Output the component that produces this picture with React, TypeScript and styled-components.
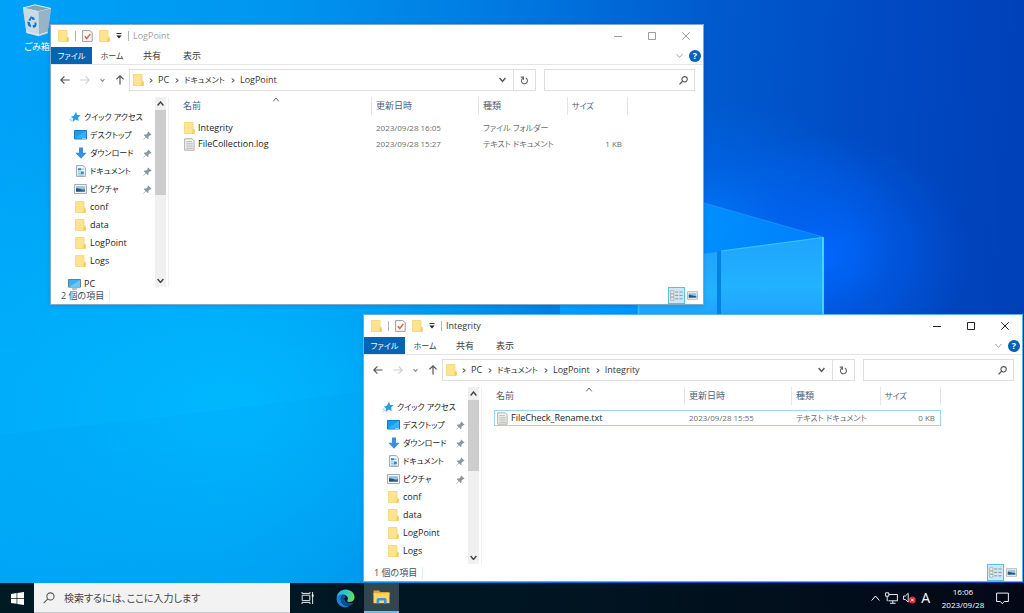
import React from "react";
import styled, { createGlobalStyle, css } from "styled-components";

const latin = `"Open Sans", "Noto Sans", "Noto Sans CJK JP", sans-serif`;

const GlobalStyle = createGlobalStyle`
  *, *::before, *::after { box-sizing: border-box; }
  html, body { margin: 0; height: 100%; }
  body {
    overflow: hidden;
    font-family: ${latin};
    font-size: 9px;
    line-height: 12px;
    color: #222;
    font-feature-settings: "palt";
  }
  button, input {
    margin: 0;
    padding: 0;
    border: 0;
    background: none;
    font: inherit;
    font-feature-settings: inherit;
    color: inherit;
    outline: none;
  }
  svg { display: block; flex: none; }
  a { color: inherit; text-decoration: none; }
`;

const Screen = styled.div`
  height: 100vh;
  display: flex;
  flex-direction: column;
`;

const Desktop = styled.main`
  position: relative;
  flex: 1;
  min-height: 0;
  overflow: hidden;
  background:
    radial-gradient(ellipse 140px 120px at 830px 255px, rgba(0, 104, 255, 0.9), rgba(0, 100, 250, 0.45) 45%, rgba(0, 90, 235, 0) 100%),
    radial-gradient(ellipse 200px 130px at 700px 230px, rgba(0, 125, 255, 0.9), rgba(0, 110, 250, 0.4) 50%, rgba(0, 90, 235, 0) 100%),
    radial-gradient(ellipse 480px 330px at 230px 410px, rgba(0, 186, 255, 0.95), rgba(0, 184, 255, 0) 100%),
    linear-gradient(94deg, #00a2f8 0%, #0096ef 26%, #0078e0 48%, #0059cd 68%, #004bc4 82%, #003eb6 100%);
`;

const WallpaperArt = styled.svg`
  position: absolute;
  left: 0;
  top: 0;
`;

const DesktopShortcut = styled.button`
  position: absolute;
  left: 13px;
  top: 4px;
  width: 48px;
  display: flex;
  flex-direction: column;
  align-items: center;
  gap: 4px;
  color: #fff;
`;

const WindowFrame = styled.section<{ $x: number; $y: number; $w: number; $h: number; $active?: boolean }>`
  position: absolute;
  left: ${(p) => p.$x}px;
  top: ${(p) => p.$y}px;
  width: ${(p) => p.$w}px;
  height: ${(p) => p.$h}px;
  display: flex;
  flex-direction: column;
  background: #fff;
  border: 1px solid ${(p) => (p.$active ? "#58b4ee" : "#7fa9cb")};
  box-shadow: 0 1px 4px rgba(0, 30, 90, 0.15);
`;

const TitleBar = styled.header<{ $active?: boolean }>`
  height: 22px;
  flex: none;
  display: flex;
  align-items: center;
  padding-left: 7px;
  color: ${(p) => (p.$active ? "#333" : "#a0a0a0")};
`;

const QuickTools = styled.div`
  display: flex;
  align-items: center;
  gap: 6px;
  margin-right: 4px;
`;

const ToolButton = styled.button`
  display: flex;
`;

const Divider = styled.span`
  width: 1px;
  height: 10px;
  background: #b4b4b4;
`;

const Title = styled.h1`
  margin: 0;
  flex: 1;
  font-size: 9px;
  font-weight: 400;
`;

const CaptionButton = styled.button<{ $active?: boolean }>`
  width: 34px;
  height: 22px;
  display: flex;
  align-items: center;
  justify-content: center;
  color: ${(p) => (p.$active ? "#222" : "#9a9a9a")};
`;

const Ribbon = styled.nav`
  height: 18px;
  flex: none;
  display: flex;
  align-items: stretch;
  border-bottom: 1px solid #e3e5e7;
`;

const RibbonTab = styled.button<{ $file?: boolean }>`
  width: ${(p) => (p.$file ? 41 : 40)}px;
  height: 17px;
  color: #3c3c3c;
  white-space: nowrap;
  ${(p) => p.$file && css`
    background: #0564b2;
    color: #fff;
  `}
`;

const RibbonEnd = styled.div`
  margin-left: auto;
  display: flex;
  align-items: center;
  gap: 6px;
  padding-right: 2px;
`;

const HelpButton = styled.button`
  width: 12px;
  height: 12px;
  border-radius: 50%;
  background: #0062b8;
  color: #fff;
  font-size: 9px;
  font-weight: 700;
  line-height: 12px;
`;

const AddressRow = styled.div`
  flex: none;
  display: flex;
  align-items: center;
  height: 30px;
  padding: 0 8px 0 9px;
`;

const NavButtons = styled.div`
  width: 69px;
  flex: none;
  display: flex;
  align-items: center;
  justify-content: space-between;
  padding-right: 4px;
`;

const IconButton = styled.button<{ $tone?: string }>`
  display: flex;
  color: ${(p) => p.$tone ?? "#555"};
`;

const AddressBox = styled.div`
  flex: 1;
  min-width: 0;
  height: 22px;
  display: flex;
  align-items: center;
  border: 1px solid #dedede;
  padding-left: 3px;
`;

const Crumbs = styled.ol`
  flex: 1;
  display: flex;
  align-items: center;
  gap: 6px;
  margin: 0;
  padding: 0 0 0 5px;
  list-style: none;
  color: #333;
`;

const Crumb = styled.li`
  display: flex;
  align-items: center;
  gap: 5px;
  white-space: nowrap;
`;

const Kana = styled.span`
  font-size: 8px;
`;

const RefreshButton = styled.button`
  width: 22px;
  align-self: stretch;
  margin-left: 7px;
  display: flex;
  align-items: center;
  justify-content: center;
  border-left: 1px solid #dedede;
  color: #666;
`;

const SearchBox = styled.label`
  width: 151px;
  height: 22px;
  margin-left: 8px;
  display: flex;
  align-items: center;
  border: 1px solid #dedede;
  padding: 0 6px;
  input { flex: 1; min-width: 0; }
`;

const Body = styled.div`
  flex: 1;
  min-height: 0;
  display: flex;
  padding-top: 2px;
`;

const Sidebar = styled.aside`
  width: 118px;
  flex: none;
  display: flex;
  border-right: 1px solid #f0f0f0;
  padding-right: 2px;
`;

const Tree = styled.ul`
  flex: 1;
  margin: 0;
  padding: 11px 0 0 17px;
  list-style: none;
`;

const TreeItem = styled.li<{ $root?: boolean; $spaced?: boolean }>`
  height: ${(p) => (p.$spaced ? 12 : 18)}px;
  margin-top: ${(p) => (p.$spaced ? 8 : 0)}px;
  padding-left: ${(p) => (p.$root ? 0 : 6)}px;
  a {
    height: 100%;
    display: flex;
    align-items: center;
    gap: 3px;
    white-space: nowrap;
  }
`;

const TreeIcon = styled.span`
  width: 13px;
  display: flex;
  justify-content: center;
`;

const TreeLabel = styled.span<{ $kana?: boolean }>`
  flex: 1;
  font-size: ${(p) => (p.$kana ? 8 : 9)}px;
`;

const PinSlot = styled.span`
  padding-right: 3px;
`;

const ScrollTrack = styled.div`
  width: 11px;
  flex: none;
  display: flex;
  flex-direction: column;
  background: #f0f0f0;
`;

const ScrollArrow = styled.button`
  height: 13px;
  flex: none;
  display: flex;
  align-items: center;
  justify-content: center;
  color: #444;
`;

const ScrollThumb = styled.div<{ $size: number }>`
  height: ${(p) => p.$size}px;
  margin-bottom: auto;
  background: #cdcdcd;
`;

const FileArea = styled.div`
  flex: 1;
  min-width: 0;
  padding-left: 12px;
`;

const FileTable = styled.table`
  width: 447px;
  table-layout: fixed;
  border-collapse: separate;
  border-spacing: 0;
`;

const HeadCell = styled.th<{ $first?: boolean }>`
  position: relative;
  height: 18px;
  padding: 0 0 0 ${(p) => (p.$first ? 2 : 4)}px;
  border-right: 1px solid #e4e4e4;
  text-align: left;
  font-weight: 400;
  color: #4c607a;
`;

const SortMark = styled.span`
  position: absolute;
  top: 0;
  left: 50%;
  transform: translateX(-50%);
  color: #666;
`;

const HeadSpacer = styled.tr`
  td { height: 5px; padding: 0; }
`;

const FileRow = styled.tr<{ $selected?: boolean }>`
  ${(p) => p.$selected && css`
    outline: 1px solid #99d1ff;
    outline-offset: -1px;
  `}
`;

const Cell = styled.td<{ $right?: boolean; $small?: boolean }>`
  height: 16px;
  padding: 0 ${(p) => (p.$right ? 6 : 0)}px 0 4px;
  font-size: ${(p) => (p.$small ? 8 : 9)}px;
  text-align: ${(p) => (p.$right ? "right" : "left")};
  white-space: nowrap;
  color: #6d6d6d;
`;

const NameCell = styled(Cell)`
  padding-left: 3px;
  color: #222;
  a { display: flex; align-items: center; gap: 3px; }
`;

const StatusBar = styled.footer`
  height: 17px;
  flex: none;
  display: flex;
  align-items: center;
  padding: 0 3px 0 10px;
  color: #3c4f6b;
`;

const StatusText = styled.span`
  padding-right: 5px;
  margin-right: auto;
  border-right: 1px solid #ececec;
`;

const ViewButton = styled.button<{ $on?: boolean }>`
  width: ${(p) => (p.$on ? 17 : 15)}px;
  height: 17px;
  display: flex;
  align-items: center;
  justify-content: center;
  border: 1px solid ${(p) => (p.$on ? "#5bbfe3" : "transparent")};
  background: ${(p) => (p.$on ? "#cbe8f3" : "transparent")};
`;

const Taskbar = styled.footer`
  height: 30px;
  flex: none;
  display: flex;
  align-items: stretch;
  background: linear-gradient(90deg, #001a24 0%, #001622 50%, #030817 100%);
  color: #fff;
`;

const TaskButton = styled.button<{ $width: number; $open?: boolean }>`
  width: ${(p) => p.$width}px;
  display: flex;
  align-items: center;
  justify-content: center;
  ${(p) => p.$open && css`
    background: #33454f;
    border-bottom: 2px solid #76b9ed;
  `}
`;

const TaskSearch = styled.label`
  width: 256px;
  display: flex;
  align-items: center;
  gap: 9px;
  padding: 0 9px;
  background: #f2f2f2;
  border-bottom: 1px solid #c4c8ca;
  color: #333;
  input {
    flex: 1;
    min-width: 0;
    font-size: 10px;
  }
  input::placeholder { color: #444; opacity: 1; }
`;

const Tray = styled.div`
  margin-left: auto;
  display: flex;
  align-items: center;
  gap: 5px;
  padding-right: 15px;
`;

const ImeButton = styled.button`
  font-size: 14px;
  line-height: 16px;
`;

const Clock = styled.time`
  width: 56px;
  text-align: center;
  font-size: 8px;
  line-height: 13px;
`;

const FolderIcon = () => (
  <svg width="11" height="12" viewBox="0 0 11 12">
    <path d="M0.5 0.5h8.5v6.5l1.5 0.6v3.9h-10z" fill="#ffe38e" stroke="#f3d374" strokeWidth="0.8" />
    <path d="M8.6 7.6h1.9v3.9h-2.4z" fill="#f3cd62" />
  </svg>
);

const FileIcon = () => (
  <svg width="11" height="13" viewBox="0 0 11 13">
    <path d="M0.7 0.8h7.4l2 2v9.4h-9.4z" fill="#f4f4f2" stroke="#a5a5a3" strokeWidth="0.9" />
    <path d="M2.3 3.5h5.6M2.3 5.3h6.4M2.3 7.1h6.4M2.3 8.9h6.4M2.3 10.6h6.4" stroke="#a9b0b0" strokeWidth="0.8" />
  </svg>
);

const PropertiesIcon = () => (
  <svg width="11" height="12" viewBox="0 0 11 12">
    <path d="M0.6 0.6h7.2l2.4 2v8.8h-9.6z" fill="#fbfbfb" stroke="#9b9b9b" />
    <path d="M2.8 6.2l2 2.3 3.6-4.6" fill="none" stroke="#e0653a" strokeWidth="1.5" />
  </svg>
);

const StarIcon = () => (
  <svg width="12" height="12" viewBox="0 0 12 12">
    <path d="M7 0.8l1.2 3.1 3.4 0.2-2.4 2.4 0.5 3.6-3.1-1.5-3 2.3 0.4-3.6-2.2-1.6 3.1-1z" fill="#2b9be6" />
    <path d="M0.3 8.4l2.4-0.5M1 10.6l2-1.6" stroke="#7cc4f2" strokeWidth="0.8" />
  </svg>
);

const DesktopIcon = () => (
  <svg width="13" height="10" viewBox="0 0 13 10">
    <path d="M0.5 0.5h12v8.5h-12z" fill="#15a0f5" stroke="#1577c6" />
    <path d="M1 8.5L11.5 1h0.5v7.5z" fill="#35b2fb" />
    <path d="M8 8.8h4" stroke="#fff" strokeWidth="0.7" />
  </svg>
);

const DownloadIcon = () => (
  <svg width="12" height="12" viewBox="0 0 12 12">
    <path d="M4 0.4h4v5.4h3.7L6 11.8 0.3 5.8h3.7z" fill="#3a8edb" />
  </svg>
);

const DocumentIcon = () => (
  <svg width="10" height="12" viewBox="0 0 10 12">
    <path d="M0.6 0.6h6.4l2.4 2.2v8.6h-8.8z" fill="#f8fafb" stroke="#8f9aa3" strokeWidth="0.9" />
    <path d="M2 3.2h3.4v2h-3.4z M4.6 6.6h3.2v2.6h-3.2z" fill="#2d8ad0" />
    <path d="M6 4.2h2M2 6.8h2M2 8.6h2M2 10.1h5.6" stroke="#64a9db" strokeWidth="0.8" />
  </svg>
);

const PictureIcon = ({ w = 13, h = 10 }: { w?: number; h?: number }) => (
  <svg width={w} height={h} viewBox="0 0 13 10">
    <path d="M0.5 0.5h12v9h-12z" fill="#f3f4f5" stroke="#a6adb2" />
    <path d="M2 2.2h9v2.8h-9z" fill="#8cc5ef" />
    <path d="M2 4.4c2.4-0.8 4 1.6 9 0.9v2.5h-9z" fill="#28546e" />
    <path d="M5 7.8c2-1.3 4-1.1 6-1.2v1.2z" fill="#4c8bd0" />
  </svg>
);

const PcIcon = () => (
  <svg width="13" height="11" viewBox="0 0 13 11">
    <path d="M0.5 0.5h12v7.6h-12z" fill="#3eb0f0" stroke="#5b8099" />
    <path d="M1 8L12 1v7z" fill="#6cc7f6" />
    <path d="M4 10h5" stroke="#6f8796" />
  </svg>
);

const PinIcon = () => (
  <svg width="9" height="9" viewBox="0 0 9 9">
    <path d="M5.2 0.4l3.4 3.4-0.9 0.5-0.7-0.1-1.6 1.6 0.1 1.7-0.8 0.6-1.7-1.8-2.5 2.4-0.3-0.3 2.3-2.5-1.7-1.7 0.7-0.8 1.7 0.1 1.6-1.6-0.1-0.8z" fill="#8a959d" />
  </svg>
);

const Chevron = ({ dir, size = 6, weight = 1 }: { dir: "up" | "down" | "right"; size?: number; weight?: number }) => {
  const angle = { up: 180, down: 0, right: -90 }[dir];
  const narrow = dir === "right";
  const half = size / 2;
  return (
    <svg width={narrow ? 4 : size} height={narrow ? size : half + 2} viewBox={narrow ? `-2 ${-half} 4 ${size}` : `${-half} ${-(half + 2) / 2} ${size} ${half + 2}`}>
      <path
        d={`M${-half + 0.6} ${-half / 2}L0 ${half / 2}L${half - 0.6} ${-half / 2}`}
        transform={`rotate(${angle})`}
        fill="none"
        stroke="currentColor"
        strokeWidth={weight}
      />
    </svg>
  );
};

const ArrowIcon = ({ turn = 0 }: { turn?: number }) => (
  <svg width="10" height="10" viewBox="-5 -5 10 10">
    <path d="M4.6 0H-4M-0.6 -3.6L-4.2 0L-0.6 3.6" transform={`rotate(${turn})`} fill="none" stroke="currentColor" strokeWidth="1.2" />
  </svg>
);

const RefreshIcon = () => (
  <svg width="9" height="9" viewBox="0 0 9 9">
    <path d="M5.8 2.1a3 3 0 1 1-2.900 0.100M0.800 1.100h2.700v2.700" fill="none" stroke="currentColor" strokeWidth="1.1" />
  </svg>
);

const LensIcon = ({ size = 9 }: { size?: number }) => (
  <svg width={size} height={size} viewBox="0 0 10 10">
    <circle cx="6.2" cy="3.7" r="3" fill="none" stroke="#555" strokeWidth={size > 9 ? 0.9 : 1.2} />
    <path d="M4 5.8L0.6 9.3" stroke="#555" strokeWidth={size > 9 ? 0.9 : 1.4} />
  </svg>
);

const DetailsIcon = () => (
  <svg width="13" height="11" viewBox="0 0 13 11">
    <path d="M0.6 0.7h3.2v2.7h-3.2zM0.6 4.1h3.2v2.7h-3.2zM0.6 7.5h3.2v2.7h-3.2z" fill="#f6f3f0" stroke="#a69d98" strokeWidth="0.7" />
    <path d="M5.2 2h3M9.4 2h3.2M5.2 5.4h3M9.4 5.4h3.2M5.2 8.8h3M9.4 8.8h3.2" stroke="#8b979d" />
  </svg>
);

const RecycleBin = () => (
  <svg width="30" height="33" viewBox="0 0 30 33">
    <path d="M1 4L13 0.8 29 4.5 25.5 29.5 17 32.3 4.5 29z" fill="#b9cfdd" opacity="0.9" />
    <path d="M1 4l15.5 3.6L29 4.5 13 0.8z" fill="#7fa3b9" stroke="#e8f3f9" strokeWidth="0.9" />
    <path d="M16.5 7.6L29 4.5 25.5 29.5 17 32.3z" fill="#97b4c6" />
    <path d="M1 4l15.5 3.6 0.5 24.7L4.5 29z" fill="#c7dae5" />
    <path d="M4.4 28l12.6 3 8.6-2.8" fill="none" stroke="#e5edf1" />
    <path d="M6.3 16.4l2.6-4.2 3 1.2 1.2 2.2-2.4 0.5-1.4-1.8-0.9 2.6zM5.2 17.8l2.4 0.2 1.2 3.2 0.3 2-2.8-1.2zM10.4 21.2l2-0.2 0.3-3.2 2 1.6-0.7 3.4-2.6 1.2z" fill="#1373c8" />
  </svg>
);

const WindowsLogo = () => (
  <svg width="13" height="13" viewBox="0 0 13 13">
    <path d="M0 1.9L5.6 1.1v5h-5.6zM6.3 1L13 0v6.1h-6.7zM0 6.8h5.6v5L0 11zM6.3 6.8h6.7V13l-6.7-1z" fill="#fff" />
  </svg>
);

const TaskViewIcon = () => (
  <svg width="14" height="12" viewBox="0 0 14 12">
    <path d="M1.2 3.2h7.6v5.4h-7.6zM1 0v1.4h8V0M1 12v-1.6h8V12M11.6 0v12" fill="none" stroke="#dfe5e8" />
    <path d="M10.8 2.6h1.8v2h-1.8z" fill="#fff" />
  </svg>
);

const EdgeIcon = () => (
  <svg width="19" height="19" viewBox="0 0 19 19">
    <defs>
      <linearGradient id="edgeTop" x1="0" y1="0.3" x2="1" y2="0.5">
        <stop offset="0" stopColor="#27a8e8" />
        <stop offset="0.55" stopColor="#35c9c0" />
        <stop offset="1" stopColor="#6ddb52" />
      </linearGradient>
    </defs>
    <path d="M0.6 9C1 4 4.6 0.5 9.6 0.5c5.2 0 8.9 3.7 8.9 7.7 0 3-2.2 4.7-4.7 4.7-2 0-3.1-0.7-2.5-1.5C13 8.5 10.6 5.8 7.2 5.8 3.7 5.8 1 7.8 0.6 9z" fill="url(#edgeTop)" />
    <path d="M0.5 9.3C1 7 4 5.500 7.2 5.8c-2 0.9-2.9 3.2-2.3 5.6 0.7 3.6 4.2 6 8 5.7-1 0.8-2.4 1.3-3.6 1.3-5 0-8.9-4.2-8.8-9.1z" fill="#1a7fd8" />
    <path d="M7.2 5.8c-2.6 1.2-3 4.4-1.5 7.2 1.6 3 5.3 4.7 8.6 3.4 1.4-0.6 2.6-1.7 3.2-2.9-3.9 1.8-8.3 0.3-8.9-2.9-0.2-1.4 0.5-2.2 1.1-2.7-0.4-1-1.3-1.9-2.5-2.1z" fill="#0c4f9e" />
  </svg>
);

const ExplorerIcon = () => (
  <svg width="17" height="14" viewBox="0 0 17 14">
    <path d="M0.5 0.5h5.5l1.4 1.6h9.1v3h-16z" fill="#e7a52a" />
    <path d="M0.5 3.2h16v10h-16z" fill="#ffd666" />
    <path d="M3.6 13.5v-4.3l1.3-1.3h7.4l1.3 1.3v4.3h-2.6v-2.9h-4.8v2.9z" fill="#3c96dc" />
  </svg>
);

const NetworkIcon = () => (
  <svg width="13" height="12" viewBox="0 0 13 12">
    <path d="M3.8 2.5h8.6v6.3H3.4M7.8 8.8v2.4M5 11.3h5.6M0.6 0.8h3.2v3.4h-3.2zM2.2 4.2v5" fill="none" stroke="#e8ebee" />
  </svg>
);

const MutedIcon = () => (
  <svg width="13" height="12" viewBox="0 0 13 12">
    <path d="M0.6 4h1.8l2.8-2.7v8.8l-2.8-2.6h-1.8z" fill="none" stroke="#e8ebee" />
    <circle cx="9.3" cy="8" r="3.5" fill="#e5252f" />
    <path d="M7.9 6.6l2.8 2.8M10.7 6.6l-2.8 2.8" stroke="#fff" />
  </svg>
);

const NoticeIcon = () => (
  <svg width="13" height="13" viewBox="0 0 13 13">
    <path d="M0.6 1.1h11.8v8.4h-4.2l-1.9 2.3-1.9-2.3h-3.8z" fill="none" stroke="#eef0f2" />
  </svg>
);

type TreeEntry = { label: string; icon: React.ReactNode; root?: boolean; pinned?: boolean; spaced?: boolean; kana?: boolean };

const treeEntries: TreeEntry[] = [
  { label: "クイック アクセス", icon: <StarIcon />, root: true, kana: true },
  { label: "デスクトップ", icon: <DesktopIcon />, pinned: true, kana: true },
  { label: "ダウンロード", icon: <DownloadIcon />, pinned: true, kana: true },
  { label: "ドキュメント", icon: <DocumentIcon />, pinned: true, kana: true },
  { label: "ピクチャ", icon: <PictureIcon />, pinned: true, kana: true },
  { label: "conf", icon: <FolderIcon /> },
  { label: "data", icon: <FolderIcon /> },
  { label: "LogPoint", icon: <FolderIcon /> },
  { label: "Logs", icon: <FolderIcon /> },
];

const pcEntry: TreeEntry = { label: "PC", icon: <PcIcon />, root: true, spaced: true };

type FileEntry = { name: string; date: string; kind: string; size: string; folder?: boolean; selected?: boolean };

type ExplorerProps = {
  title: string;
  path: string[];
  files: FileEntry[];
  entries: TreeEntry[];
  status: string;
  thumb: number;
  active?: boolean;
  x: number;
  y: number;
  w: number;
  h: number;
};

const isKana = (text: string) => /[ァ-ヶ]/.test(text);

function Explorer({ title, path, files, entries, status, thumb, active, x, y, w, h }: ExplorerProps) {
  return (
    <WindowFrame $x={x} $y={y} $w={w} $h={h} $active={active} aria-label={title}>
      <TitleBar $active={active}>
        <QuickTools>
          <FolderIcon />
          <Divider />
          <ToolButton aria-label="プロパティ"><PropertiesIcon /></ToolButton>
          <ToolButton aria-label="新しいフォルダー"><FolderIcon /></ToolButton>
          <ToolButton aria-label="カスタマイズ">
            <svg width="6" height="6" viewBox="0 0 6 6">
              <path d="M0.5 0.6h5" stroke="#222" />
              <path d="M0.3 2.4h5.4L3 5.4z" fill="#222" />
            </svg>
          </ToolButton>
          <Divider />
        </QuickTools>
        <Title>{title}</Title>
        <CaptionButton $active={active} aria-label="最小化">
          <svg width="8" height="8" viewBox="0 0 8 8"><path d="M0 4.5h8" stroke="currentColor" /></svg>
        </CaptionButton>
        <CaptionButton $active={active} aria-label="最大化">
          <svg width="8" height="8" viewBox="0 0 8 8"><path d="M0.5 0.5h7v7h-7z" fill="none" stroke="currentColor" /></svg>
        </CaptionButton>
        <CaptionButton $active={active} aria-label="閉じる">
          <svg width="8" height="8" viewBox="0 0 8 8"><path d="M0.3 0.3l7.4 7.4M7.7 0.3l-7.4 7.4" stroke="currentColor" /></svg>
        </CaptionButton>
      </TitleBar>
      <Ribbon>
        <RibbonTab $file><Kana>ファイル</Kana></RibbonTab>
        <RibbonTab><Kana>ホーム</Kana></RibbonTab>
        <RibbonTab>共有</RibbonTab>
        <RibbonTab>表示</RibbonTab>
        <RibbonEnd>
          <IconButton $tone="#a5a5a5" aria-label="リボンの展開"><Chevron dir="down" size={7} /></IconButton>
          <HelpButton aria-label="ヘルプ">?</HelpButton>
        </RibbonEnd>
      </Ribbon>
      <AddressRow>
        <NavButtons>
          <IconButton aria-label="戻る"><ArrowIcon /></IconButton>
          <IconButton $tone="#cfcfcf" aria-label="進む"><ArrowIcon turn={180} /></IconButton>
          <IconButton $tone="#8a8a8a" aria-label="履歴"><Chevron dir="down" size={5} weight={1.2} /></IconButton>
          <IconButton aria-label="上へ"><ArrowIcon turn={90} /></IconButton>
        </NavButtons>
        <AddressBox>
          <FolderIcon />
          <Crumbs>
            {path.map((part) => (
              <Crumb key={part}>
                <Chevron dir="right" size={5} />
                {isKana(part) ? <Kana>{part}</Kana> : <span>{part}</span>}
              </Crumb>
            ))}
          </Crumbs>
          <IconButton aria-label="以前の場所"><Chevron dir="down" size={7} weight={1.4} /></IconButton>
          <RefreshButton aria-label="更新"><RefreshIcon /></RefreshButton>
        </AddressBox>
        <SearchBox>
          <input type="text" aria-label="検索" />
          <LensIcon />
        </SearchBox>
      </AddressRow>
      <Body>
        <Sidebar>
          <Tree>
            {entries.map((entry) => (
              <TreeItem key={entry.label} $root={entry.root} $spaced={entry.spaced}>
                <a href="#">
                  <TreeIcon>{entry.icon}</TreeIcon>
                  <TreeLabel $kana={entry.kana}>{entry.label}</TreeLabel>
                  {entry.pinned && <PinSlot><PinIcon /></PinSlot>}
                </a>
              </TreeItem>
            ))}
          </Tree>
          <ScrollTrack>
            <ScrollArrow aria-label="上にスクロール"><Chevron dir="up" size={7} weight={1.4} /></ScrollArrow>
            <ScrollThumb $size={thumb} />
            <ScrollArrow aria-label="下にスクロール"><Chevron dir="down" size={7} weight={1.4} /></ScrollArrow>
          </ScrollTrack>
        </Sidebar>
        <FileArea>
          <FileTable>
            <colgroup>
              <col />
              <col width="107" />
              <col width="89" />
              <col width="60" />
            </colgroup>
            <thead>
              <tr>
                <HeadCell $first>名前<SortMark><Chevron dir="up" size={7} /></SortMark></HeadCell>
                <HeadCell>更新日時</HeadCell>
                <HeadCell>種類</HeadCell>
                <HeadCell><Kana>サイズ</Kana></HeadCell>
              </tr>
            </thead>
            <tbody>
              <HeadSpacer><td colSpan={4} /></HeadSpacer>
              {files.map((file) => (
                <FileRow key={file.name} $selected={file.selected}>
                  <NameCell><a href="#">{file.folder ? <FolderIcon /> : <FileIcon />}<span>{file.name}</span></a></NameCell>
                  <Cell $small>{file.date}</Cell>
                  <Cell $small>{file.kind}</Cell>
                  <Cell $small $right>{file.size}</Cell>
                </FileRow>
              ))}
            </tbody>
          </FileTable>
        </FileArea>
      </Body>
      <StatusBar>
        <StatusText>{status}</StatusText>
        <ViewButton $on aria-label="詳細"><DetailsIcon /></ViewButton>
        <ViewButton aria-label="大アイコン"><PictureIcon w={11} h={9} /></ViewButton>
      </StatusBar>
    </WindowFrame>
  );
}

export default function App() {
  return (
    <Screen>
      <GlobalStyle />
      <Desktop>
        <WallpaperArt width="1024" height="583" viewBox="0 0 1024 583" aria-hidden="true">
          <defs>
            <linearGradient id="beam" x1="0" y1="0" x2="1" y2="0">
              <stop offset="0" stopColor="#00a2ff" stopOpacity="0.9" />
              <stop offset="1" stopColor="#0088ff" stopOpacity="0.8" />
            </linearGradient>
            <linearGradient id="pane" x1="0" y1="0" x2="0" y2="1">
              <stop offset="0" stopColor="#1fa4ff" />
              <stop offset="0.6" stopColor="#22b2ff" />
              <stop offset="1" stopColor="#1fa0ff" />
            </linearGradient>
          </defs>
          <path d="M560 158L704 203 823 237 823 320 560 320z" fill="url(#beam)" />
          <path d="M704 203L823 237" stroke="#2d9dff" strokeWidth="1" opacity="0.6" />
          <path d="M638 262L717 252V320H638z" fill="url(#pane)" />
          <path d="M717 251.5L721 251V320H717z" fill="#0480e6" />
          <path d="M721 251L824 237V320H721z" fill="url(#pane)" />
          <path d="M721 251L823 237.5" fill="none" stroke="#35c4ff" strokeWidth="1.2" />
          <path d="M823 237V320" fill="none" stroke="#45dcff" strokeWidth="1.8" />
          <path d="M638.5 300V320" stroke="#35c0ff" strokeWidth="1.5" />
          <path d="M0 435C130 422 260 405 362 392V583H0z" fill="#0090f0" opacity="0.12" />
        </WallpaperArt>
        <DesktopShortcut>
          <RecycleBin />
          <span>ごみ箱</span>
        </DesktopShortcut>
        <Explorer
          title="LogPoint"
          path={["PC", "ドキュメント", "LogPoint"]}
          entries={[...treeEntries, pcEntry]}
          files={[
            { name: "Integrity", date: "2023/09/28 16:05", kind: "ファイル フォルダー", size: "", folder: true },
            { name: "FileCollection.log", date: "2023/09/28 15:27", kind: "テキスト ドキュメント", size: "1 KB" },
          ]}
          status="2 個の項目"
          thumb={85}
          x={50}
          y={24}
          w={654}
          h={281}
        />
        <Explorer
          active
          title="Integrity"
          path={["PC", "ドキュメント", "LogPoint", "Integrity"]}
          entries={treeEntries}
          files={[{ name: "FileCheck_Rename.txt", date: "2023/09/28 15:55", kind: "テキスト ドキュメント", size: "0 KB", selected: true }]}
          status="1 個の項目"
          thumb={71}
          x={363}
          y={314}
          w={660}
          h={268}
        />
      </Desktop>
      <Taskbar>
        <TaskButton $width={34} aria-label="スタート"><WindowsLogo /></TaskButton>
        <TaskSearch>
          <LensIcon size={12} />
          <input type="text" aria-label="検索" placeholder="検索するには、ここに入力します" />
        </TaskSearch>
        <TaskButton $width={36} aria-label="タスク ビュー"><TaskViewIcon /></TaskButton>
        <TaskButton $width={38} aria-label="Edge"><EdgeIcon /></TaskButton>
        <TaskButton $width={35} $open aria-label="エクスプローラー"><ExplorerIcon /></TaskButton>
        <Tray>
          <IconButton $tone="#fff" aria-label="隠れているインジケーター"><Chevron dir="up" size={9} /></IconButton>
          <NetworkIcon />
          <MutedIcon />
          <ImeButton aria-label="入力モード">A</ImeButton>
          <Clock>16:06<br />2023/09/28</Clock>
          <IconButton $tone="#fff" aria-label="通知"><NoticeIcon /></IconButton>
        </Tray>
      </Taskbar>
    </Screen>
  );
}
